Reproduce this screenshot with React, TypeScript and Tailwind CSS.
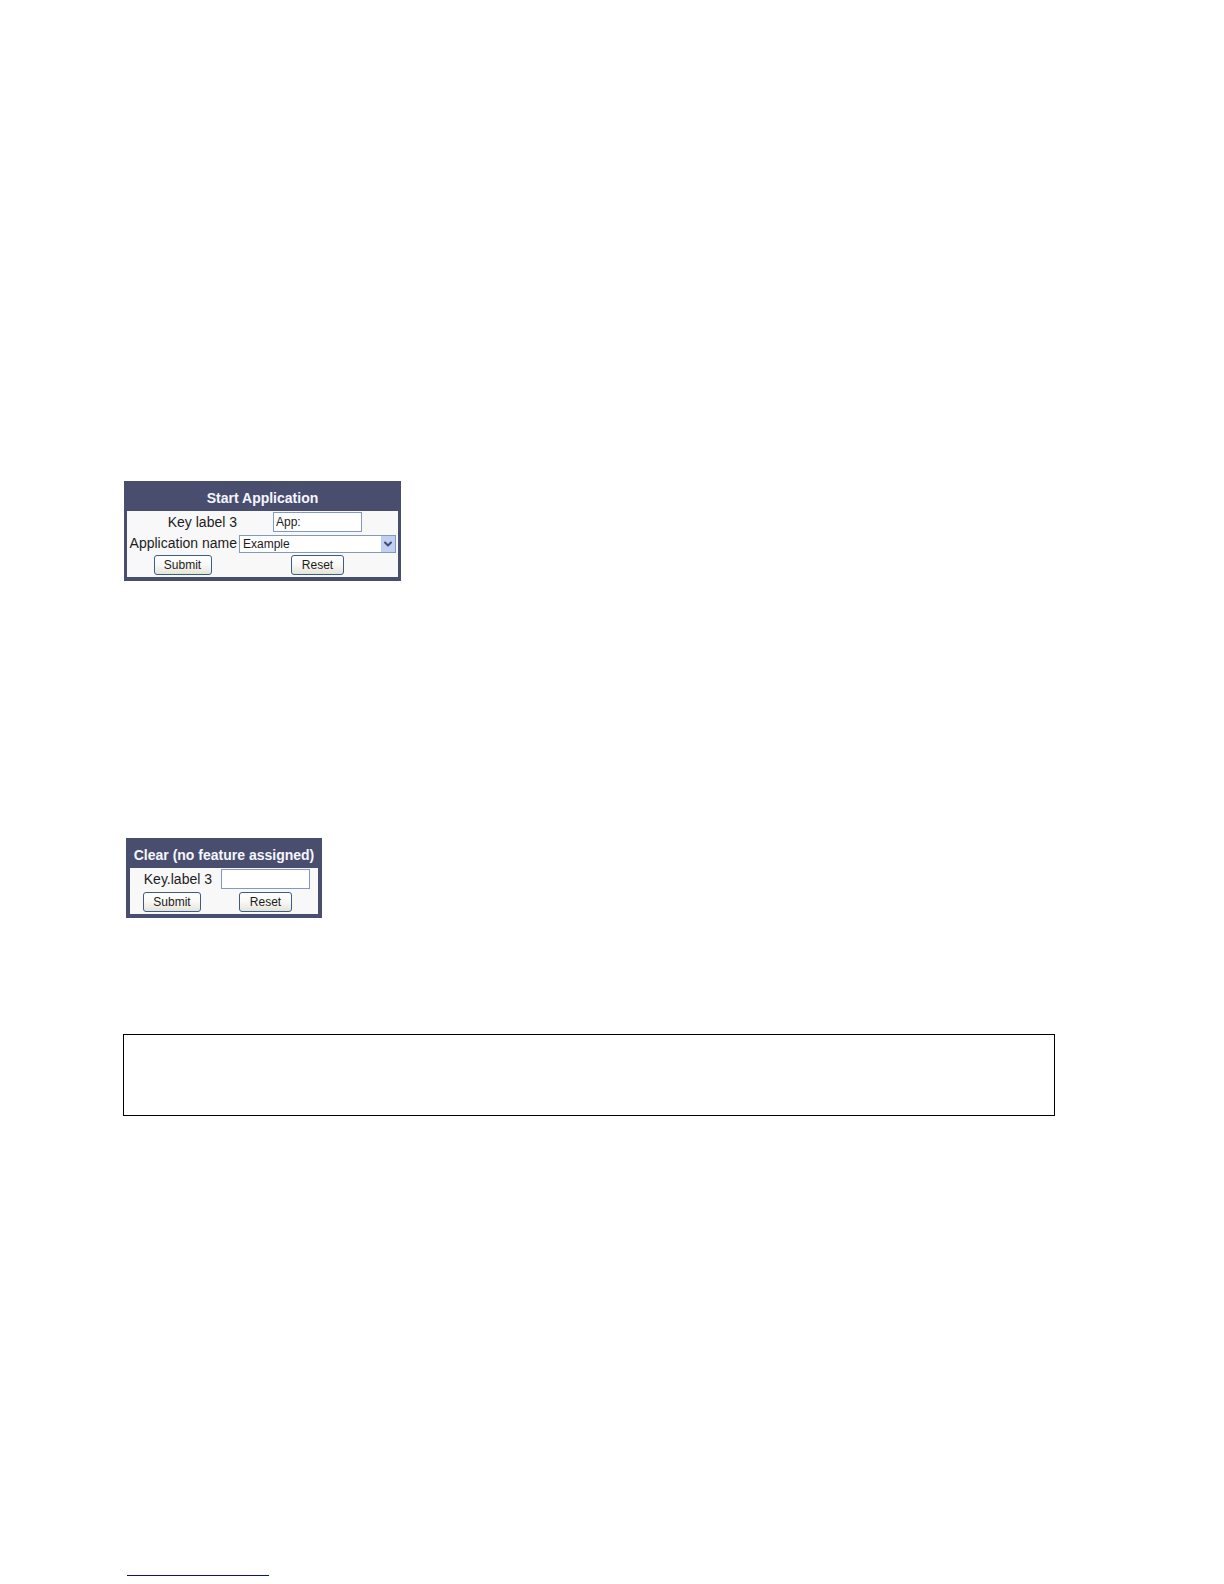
import type { ReactNode } from "react";
import { FiChevronDown } from "react-icons/fi";

const buttonClass =
  "h-5 rounded-[3px] border border-[#3d5c8a] bg-gradient-to-b from-white via-[#f8f8f5] to-[#e6e4d8] text-xs leading-4 text-[#1c1c1c]";

const inputClass =
  "h-5 w-[89px] border border-[#8299c4] bg-white px-[2px] text-xs text-[#1c1c1c] outline-none";

const Buttons = () => (
  <>
    <button type="submit" className={`${buttonClass} w-[58px] justify-self-center`}>
      Submit
    </button>
    <button type="reset" className={`${buttonClass} w-[53px] justify-self-center`}>
      Reset
    </button>
  </>
);

type PanelProps = {
  title: string;
  children: ReactNode;
};

const Panel = ({ title, children }: PanelProps) => (
  <form
    className="w-fit bg-[#4a4e6e] px-[3px] pb-1 text-sm"
    onSubmit={(e) => e.preventDefault()}
  >
    <h2 className="pt-[7px] pb-[3px] text-center font-bold leading-5 text-[#f4f6ff]">{title}</h2>
    {children}
  </form>
);

const App = () => {
  return (
    <main className="bg-white pt-[481px] pr-[169px] pb-2 pl-[123px] font-['Liberation_Sans',Arial,sans-serif] text-[#1c1c1c]">
      {/* Start Application */}
      <div className="pl-px">
        <Panel title="Start Application">
          <div className="grid grid-cols-[109px_157px] items-center gap-x-[2px] gap-y-[2px] bg-[#f8f8f9] pt-px pr-[2px] pb-[2px] pl-px">
            <label htmlFor="app-key-label" className="justify-self-end leading-5">
              Key label 3
            </label>
            <input
              id="app-key-label"
              type="text"
              defaultValue="App:"
              className={`${inputClass} justify-self-center`}
            />

            <label htmlFor="app-name" className="justify-self-end whitespace-nowrap leading-[19px]">
              Application name
            </label>
            <div className="relative">
              <select
                id="app-name"
                className="block h-[18px] w-full appearance-none border border-[#7f9db9] bg-white px-[3px] text-xs leading-4 outline-none"
              >
                <option>Example</option>
              </select>
              <span className="pointer-events-none absolute top-px right-px flex h-4 w-[14px] items-center justify-center bg-[#c2cff2] text-[#3e4c78]">
                <FiChevronDown size={12} strokeWidth={4} />
              </span>
            </div>

            <Buttons />
          </div>
        </Panel>
      </div>

      {/* Clear */}
      <div className="mt-[257px] pl-[3px]">
        <Panel title="Clear (no feature assigned)">
          <div className="mx-px grid grid-cols-[82px_101px] items-center gap-x-[2px] gap-y-[3px] bg-[#f8f8f9] pt-px pr-[2px] pb-[2px] pl-px">
            <label htmlFor="clear-key-label" className="justify-self-end pr-px leading-5">
              Key.label 3
            </label>
            <input
              id="clear-key-label"
              type="text"
              className={`${inputClass} justify-self-center`}
            />

            <Buttons />
          </div>
        </Panel>
      </div>

      {/* Note box */}
      <div className="mt-[116px] h-[82px] border border-black"></div>

      <footer className="mt-[443px] pl-1">
        <a
          href="#contents"
          aria-label="Contents"
          className="block h-[17px] w-[142px] border-b border-[#0f0f8f]"
        ></a>
      </footer>
    </main>
  );
};

export default App;
